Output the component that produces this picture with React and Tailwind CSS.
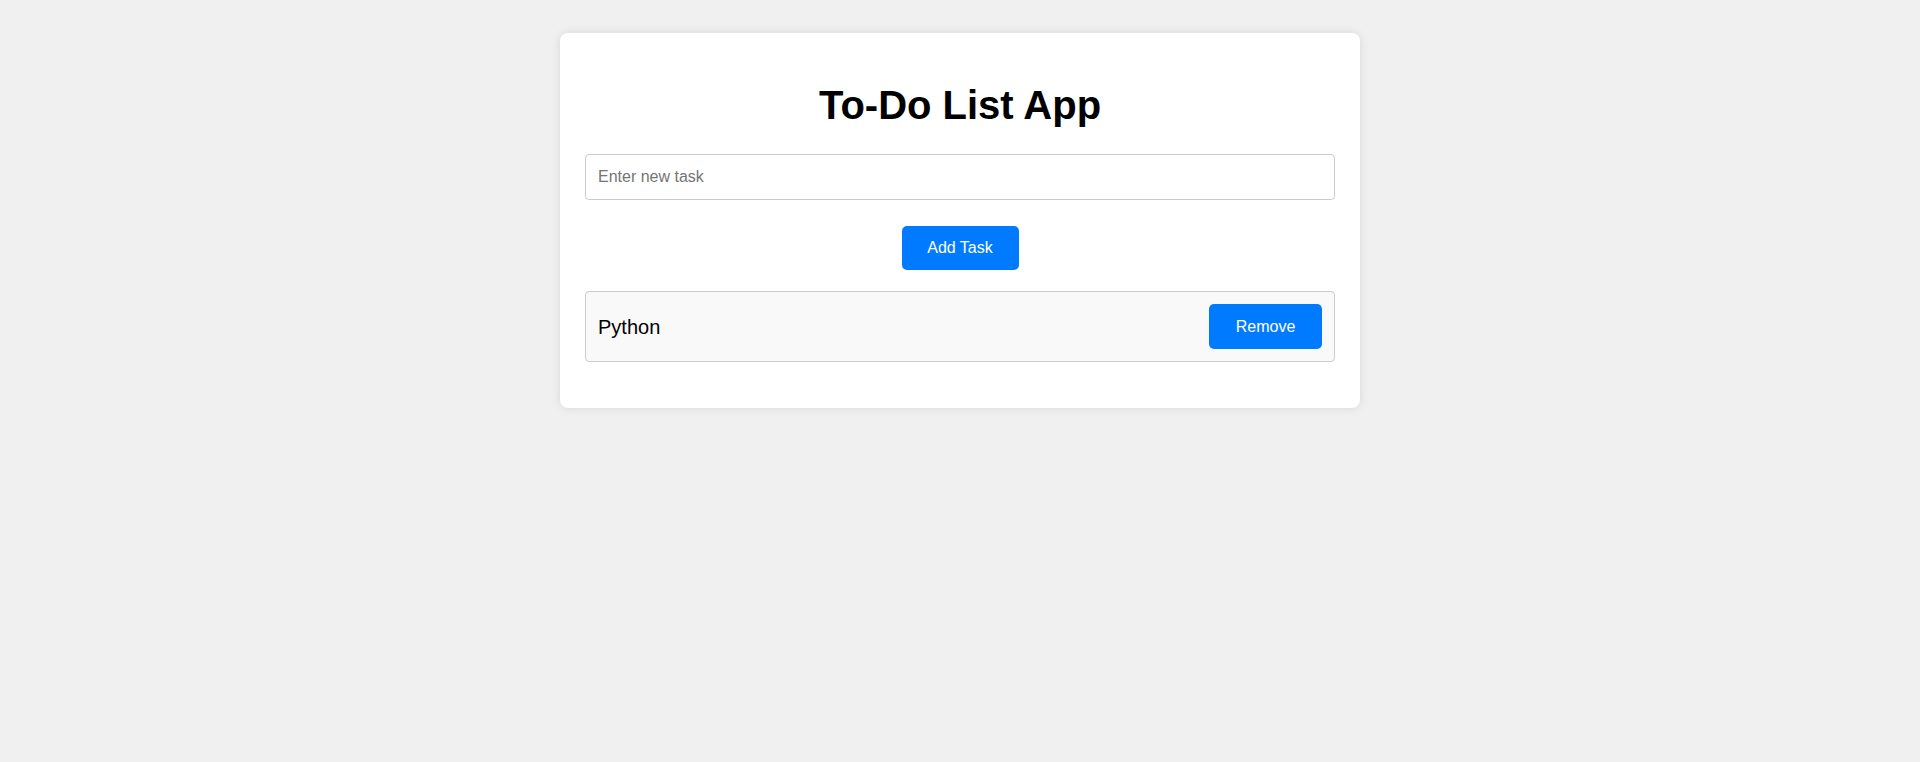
import React, { useState } from "react";

export default function App() {
  const [tasks, setTasks] = useState(["Python"]);
  const [value, setValue] = useState("");

  const add = () => {
    if (!value.trim()) return;
    setTasks([...tasks, value.trim()]);
    setValue("");
  };

  return (
    <div
      className="min-h-[762px] w-full bg-[#f0f0f0] flex justify-center pt-[33px]"
      style={{ fontFamily: '"Liberation Sans", Arial, sans-serif' }}
    >
      <div className="w-[800px] self-start bg-white rounded-[8px] shadow-[0_0_10px_rgba(0,0,0,0.1)] px-[25px] pt-[50px] pb-[46px]">
        <h1 className="text-center text-[40px] leading-[45px] font-bold text-black mb-[26px]">
          To-Do List App
        </h1>
        <input
          type="text"
          value={value}
          onChange={(e) => setValue(e.target.value)}
          placeholder="Enter new task"
          className="block w-full h-[46px] border border-[#cccccc] rounded-[4px] px-[12px] text-[16px] text-black placeholder:text-[#757575] outline-none"
        />
        <div className="flex justify-center mt-[26px] mb-[21px]">
          <button
            onClick={add}
            className="w-[117px] h-[44px] bg-[#007bff] text-white text-[16px] rounded-[5px]"
          >
            Add Task
          </button>
        </div>
        <ul className="flex flex-col gap-[10px]">
          {tasks.map((t, i) => (
            <li
              key={i}
              className="flex items-center justify-between bg-[#f9f9f9] border border-[#cccccc] rounded-[4px] p-[12px]"
            >
              <span className="text-[20px] text-black">{t}</span>
              <button
                onClick={() => setTasks(tasks.filter((_, j) => j !== i))}
                className="w-[113px] h-[45px] bg-[#007bff] text-white text-[16px] rounded-[5px]"
              >
                Remove
              </button>
            </li>
          ))}
        </ul>
      </div>
    </div>
  );
}
